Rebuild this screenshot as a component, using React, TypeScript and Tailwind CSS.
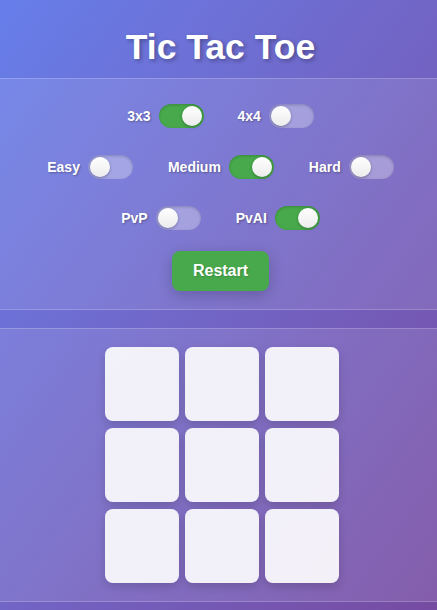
import { useState } from 'react'

type ToggleProps = {
  label: string
  on: boolean
  onChange: () => void
}

function Toggle({ label, on, onChange }: ToggleProps) {
  return (
    <label className="flex items-center gap-2 cursor-pointer">
      <span className="text-[14px] font-bold text-white leading-none [text-shadow:1px_1px_2px_rgba(0,0,0,0.3)]">
        {label}
      </span>
      <button
        onClick={onChange}
        className={
          'relative w-[45px] h-6 rounded-full shadow-[inset_0_1px_3px_rgba(0,0,0,0.2)] transition-colors ' +
          (on ? 'bg-[#47a94b]' : 'bg-white/30')
        }
      >
        <span
          className={
            'absolute top-[2px] w-5 h-5 rounded-full bg-gradient-to-b from-white to-[#ececec] shadow-[0_1px_3px_rgba(0,0,0,0.3)] transition-all ' +
            (on ? 'left-[23px]' : 'left-[2px]')
          }
        />
      </button>
    </label>
  )
}

export default function App() {
  const [size, setSize] = useState<'3x3' | '4x4'>('3x3')
  const [level, setLevel] = useState<'easy' | 'medium' | 'hard'>('medium')
  const [mode, setMode] = useState<'pvp' | 'pvai'>('pvai')
  const [cells, setCells] = useState<string[]>(Array(9).fill(''))

  const restart = () => setCells(Array(9).fill(''))

  return (
    <div className="min-h-screen bg-gradient-to-br from-[#667eea] to-[#764ba2] flex flex-col items-center font-['Liberation_Sans',Arial,sans-serif]">
      <h1 className="mt-[27px] mb-[11px] pl-1 text-[35.5px] leading-[40px] font-bold text-white [text-shadow:2px_2px_4px_rgba(0,0,0,0.3)]">
        Tic Tac Toe
      </h1>

      <div className="w-full border-y border-white/20 bg-white/10 pl-1 pt-[25px] pb-[18px] flex flex-col items-center">
        <div className="flex gap-[34px]">
          <Toggle label="3x3" on={size === '3x3'} onChange={() => setSize('3x3')} />
          <Toggle label="4x4" on={size === '4x4'} onChange={() => setSize('4x4')} />
        </div>
        <div className="flex gap-[35px] mt-[27px]">
          <Toggle label="Easy" on={level === 'easy'} onChange={() => setLevel('easy')} />
          <Toggle label="Medium" on={level === 'medium'} onChange={() => setLevel('medium')} />
          <Toggle label="Hard" on={level === 'hard'} onChange={() => setLevel('hard')} />
        </div>
        <div className="flex gap-[35px] mt-[27px]">
          <Toggle label="PvP" on={mode === 'pvp'} onChange={() => setMode('pvp')} />
          <Toggle label="PvAI" on={mode === 'pvai'} onChange={() => setMode('pvai')} />
        </div>
        <button
          onClick={restart}
          className="mt-[21px] h-10 px-[21px] rounded-lg bg-[#48a94c] text-white text-[16px] font-bold shadow-[0_4px_15px_rgba(0,0,0,0.2)] [text-shadow:1px_1px_2px_rgba(0,0,0,0.2)]"
        >
          Restart
        </button>
      </div>

      <div className="w-full mt-[18px] border-y border-white/20 bg-white/10 pl-1 py-[18px] flex justify-center">
        <div className="grid grid-cols-[repeat(3,74px)] auto-rows-[74px] gap-x-[6px] gap-y-[7px] ml-[3px]">
          {cells.map((c, i) => (
            <button
              key={i}
              onClick={() => {
                if (c) return
                const next = [...cells]
                next[i] = 'X'
                setCells(next)
              }}
              className="rounded-lg bg-white/90 shadow-[0_4px_10px_rgba(0,0,0,0.15)] text-[40px] font-bold text-[#5a5a9a]"
            >
              {c}
            </button>
          ))}
        </div>
      </div>
    </div>
  )
}
